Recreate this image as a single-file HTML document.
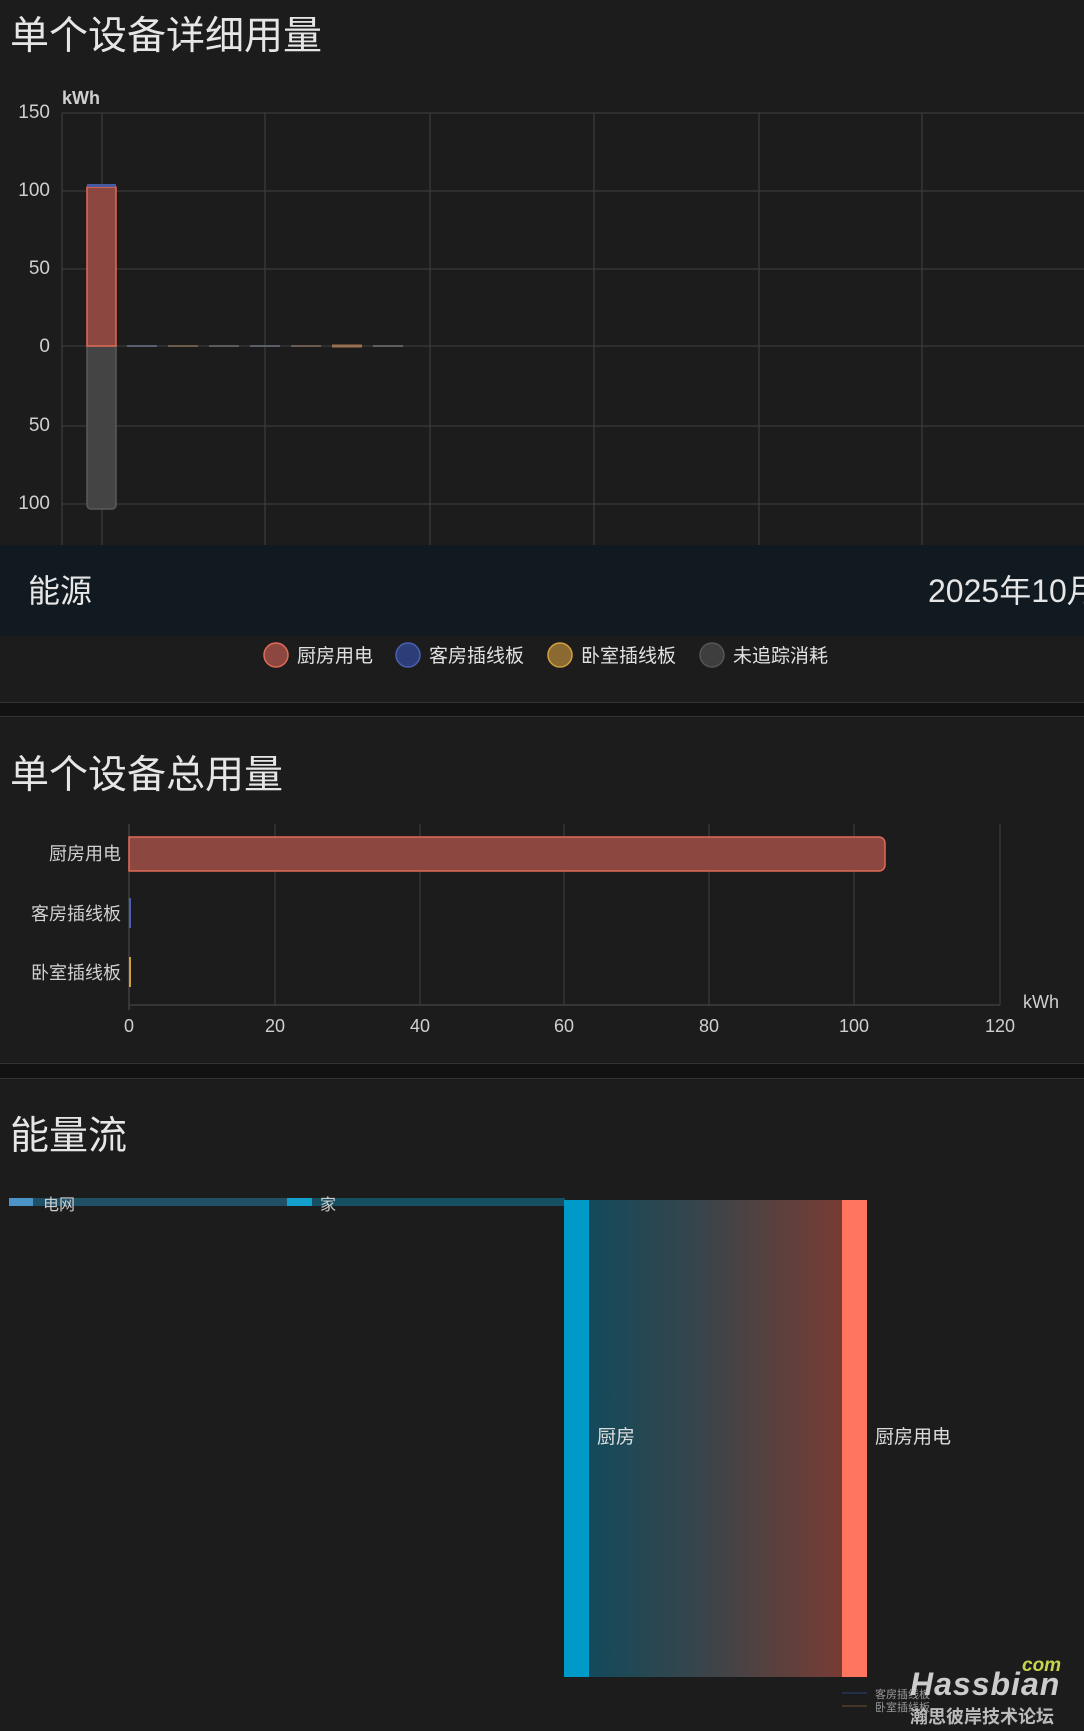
<!DOCTYPE html>
<html><head><meta charset="utf-8"><style>
*{margin:0;padding:0;box-sizing:border-box}
body{width:1084px;height:1731px;background:#1c1c1c;position:relative;overflow:hidden;font-family:"Liberation Sans","Noto Sans CJK SC",sans-serif;color:#e1e1e1}
.a{position:absolute;white-space:nowrap}
.t{font-size:39px;line-height:44px;color:#e6e6e6}
</style></head><body>
<div class="a t" style="left:10px;top:15px">单个设备详细用量</div>
<svg class="a" style="left:0;top:0" width="1084" height="545">
<g stroke="#3a3a3a" stroke-width="1.3">
<line x1="62" y1="113" x2="1084" y2="113"/><line x1="62" y1="191" x2="1084" y2="191"/><line x1="62" y1="269" x2="1084" y2="269"/>
<line x1="62" y1="346" x2="1084" y2="346"/><line x1="62" y1="426" x2="1084" y2="426"/><line x1="62" y1="504" x2="1084" y2="504"/>
<line x1="62" y1="113" x2="62" y2="545"/><line x1="102" y1="113" x2="102" y2="545"/><line x1="265" y1="113" x2="265" y2="545"/><line x1="430" y1="113" x2="430" y2="545"/><line x1="594" y1="113" x2="594" y2="545"/><line x1="759" y1="113" x2="759" y2="545"/><line x1="922" y1="113" x2="922" y2="545"/>
</g>
<path d="M87 346 V505 a4 4 0 0 0 4 4 H112 a4 4 0 0 0 4 -4 V346 Z" fill="#444" stroke="#5a5a5a" stroke-width="1.5"/>
<rect x="87" y="187" width="29" height="159" fill="#8c4840" stroke="#e06a58" stroke-width="1.5"/>
<rect x="87" y="184" width="29" height="3" fill="#4a5aa0"/>
<g stroke-width="2"><line x1="127" y1="346" x2="157" y2="346" stroke="#5a5e70"/><line x1="168" y1="346" x2="198" y2="346" stroke="#6e5a48"/><line x1="209" y1="346" x2="239" y2="346" stroke="#5e5a58"/><line x1="250" y1="346" x2="280" y2="346" stroke="#5a5e68"/><line x1="291" y1="346" x2="321" y2="346" stroke="#6a5a50"/><line x1="332" y1="346" x2="362" y2="346" stroke="#9a7050" stroke-width="3"/><line x1="373" y1="346" x2="403" y2="346" stroke="#5e5e5e"/></g>
<g font-family="Liberation Sans,sans-serif" font-size="19" fill="#cfcfcf" text-anchor="end">
<text x="50" y="118">150</text><text x="50" y="196">100</text><text x="50" y="274">50</text><text x="50" y="352">0</text><text x="50" y="431">50</text><text x="50" y="509">100</text></g>
<text x="62" y="104" font-family="Liberation Sans,sans-serif" font-size="18" font-weight="bold" fill="#cfcfcf">kWh</text>
</svg>
<div class="a" style="left:0;top:545px;width:1084px;height:91px;background:#111a20"></div>
<div class="a" style="left:28px;top:566px;font-size:32px;color:#e6e6e6">能源</div>
<div class="a" style="left:928px;top:566px;font-size:32px;color:#e6e6e6">2025年10月</div>
<svg class="a" style="left:0;top:640px" width="1084" height="30">
<circle cx="276" cy="15" r="12" fill="#8c4840" stroke="#e06a58" stroke-width="1.5"/>
<circle cx="408" cy="15" r="12" fill="#2c3e78" stroke="#4a60b0" stroke-width="1.5"/>
<circle cx="560" cy="15" r="12" fill="#8a6a30" stroke="#d0a040" stroke-width="1.5"/>
<circle cx="712" cy="15" r="12" fill="#3e3e3e" stroke="#555" stroke-width="1.5"/>
</svg>
<div class="a" style="left:297px;top:641px;font-size:19px">厨房用电</div>
<div class="a" style="left:429px;top:641px;font-size:19px">客房插线板</div>
<div class="a" style="left:581px;top:641px;font-size:19px">卧室插线板</div>
<div class="a" style="left:733px;top:641px;font-size:19px">未追踪消耗</div>
<div class="a" style="left:0;top:702px;width:1084px;height:15px;background:#121212;border-top:1px solid #333;border-bottom:1px solid #333"></div>
<div class="a t" style="left:10px;top:754px">单个设备总用量</div>
<svg class="a" style="left:0;top:815px" width="1084" height="230">
<g stroke="#383838" stroke-width="1.3"><line x1="275" y1="9" x2="275" y2="190"/><line x1="420" y1="9" x2="420" y2="190"/><line x1="564" y1="9" x2="564" y2="190"/><line x1="709" y1="9" x2="709" y2="190"/><line x1="854" y1="9" x2="854" y2="190"/><line x1="1000" y1="9" x2="1000" y2="190"/><line x1="129" y1="190" x2="1000" y2="190" stroke="#444"/><line x1="129" y1="9" x2="129" y2="195" stroke="#444"/></g>
<path d="M129 22 H879 a6 6 0 0 1 6 6 V50 a6 6 0 0 1 -6 6 H129 Z" fill="#8c4840" stroke="#e06a58" stroke-width="1.5"/>
<line x1="130" y1="83" x2="130" y2="113" stroke="#4a60b0" stroke-width="2"/>
<line x1="130" y1="142" x2="130" y2="172" stroke="#d0a040" stroke-width="2"/>
<g font-family="Liberation Sans,sans-serif" font-size="18" fill="#cfcfcf" text-anchor="middle">
<text x="129" y="217">0</text><text x="275" y="217">20</text><text x="420" y="217">40</text><text x="564" y="217">60</text><text x="709" y="217">80</text><text x="854" y="217">100</text><text x="1000" y="217">120</text></g>
<text x="1023" y="193" font-family="Liberation Sans,sans-serif" font-size="18" fill="#cfcfcf">kWh</text>
</svg>
<div class="a" style="right:963px;top:840px;font-size:18px;color:#d0d0d0">厨房用电</div>
<div class="a" style="right:963px;top:900px;font-size:18px;color:#d0d0d0">客房插线板</div>
<div class="a" style="right:963px;top:959px;font-size:18px;color:#d0d0d0">卧室插线板</div>
<div class="a" style="left:0;top:1063px;width:1084px;height:16px;background:#121212;border-top:1px solid #333;border-bottom:1px solid #333"></div>
<div class="a t" style="left:10px;top:1115px">能量流</div>
<svg class="a" style="left:0;top:1190px" width="1084" height="541">
<defs><linearGradient id="g" x1="0" x2="1"><stop offset="0" stop-color="#124a5c"/><stop offset="0.5" stop-color="#3e4448"/><stop offset="1" stop-color="#783c34"/></linearGradient></defs>
<rect x="33" y="8" width="254" height="8" fill="#1f5066"/>
<rect x="312" y="8" width="253" height="8" fill="#164e62"/>
<rect x="9" y="8" width="24" height="8" fill="#4a94c8"/>
<rect x="287" y="8" width="25" height="8" fill="#14a0cc"/>
<rect x="589" y="10" width="253" height="477" fill="url(#g)"/>
<rect x="564" y="10" width="25" height="477" fill="#009ac8"/>
<rect x="842" y="10" width="25" height="477" fill="#ff7560"/>
<line x1="842" y1="503" x2="867" y2="503" stroke="#2c3e78"/><line x1="842" y1="516" x2="867" y2="516" stroke="#6a5030"/>
</svg>
<div class="a" style="left:43px;top:1191px;font-size:16px;color:#ccc">电网</div>
<div class="a" style="left:320px;top:1191px;font-size:16px;color:#ccc">家</div>
<div class="a" style="left:597px;top:1422px;font-size:19px;color:#ddd">厨房</div>
<div class="a" style="left:875px;top:1422px;font-size:19px;color:#ddd">厨房用电</div>
<div class="a" style="left:875px;top:1686px;font-size:11px;color:#999">客房插线板</div>
<div class="a" style="left:875px;top:1699px;font-size:11px;color:#999">卧室插线板</div>
<div class="a" style="left:1022px;top:1655px;font-size:19px;font-style:italic;font-weight:bold;color:#c8d44a">com</div>
<div class="a" style="left:910px;top:1666px;font-size:32px;font-style:italic;font-weight:bold;color:#ccc;letter-spacing:1px">Hassbian</div>
<div class="a" style="left:910px;top:1703px;font-size:18px;font-weight:bold;color:#bbb">瀚思彼岸技术论坛</div>
</body></html>
